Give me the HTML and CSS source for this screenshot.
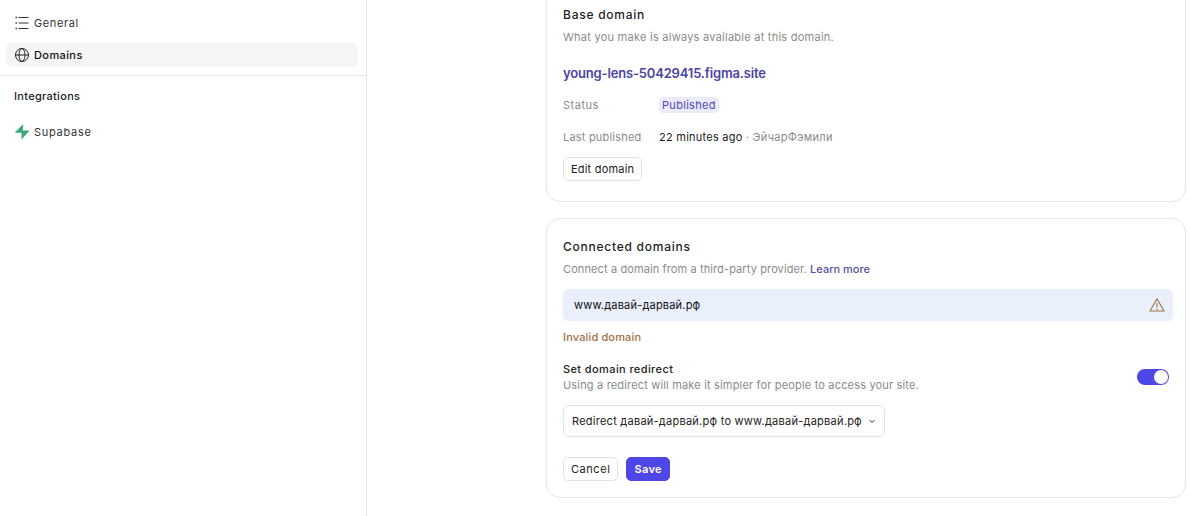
FILE: index.html
```html
<!DOCTYPE html>
<html lang="en">
<head>
<meta charset="utf-8">
<title>Domains</title>
<link rel="stylesheet" href="styles.css">
</head>
<body>
<div class="app">
  <aside class="sidebar">
    <nav class="nav-top">
      <a class="nav-item">
        <svg class="nav-icon" viewBox="0 0 16 16" fill="none" stroke="#333" stroke-width="1"><path d="M4.500 2.500h10M4.500 8h10M4.500 13.500h10"/><path d="M1.500 2.500h1.400M1.500 8h1.400M1.500 13.500h1.400" stroke-width="1.500"/></svg>
        <span>General</span>
      </a>
      <a class="nav-item active">
        <svg class="nav-icon" viewBox="0 0 16 16" fill="none" stroke="#222" stroke-width="1"><circle cx="8" cy="8" r="6.500"/><ellipse cx="8" cy="8" rx="3" ry="6.500"/><path d="M1.500 8h13"/></svg>
        <span>Domains</span>
      </a>
    </nav>
    <div class="nav-bottom">
      <div class="nav-title">Integrations</div>
      <a class="nav-item">
        <svg class="nav-icon" viewBox="0 0 16 16"><path fill="#45b98a" d="M9 .5 1 8.500h6.500L8 8z"/><path fill="#39a87b" d="M9 .5 8.800 6.500H15.500L7.500 15.500 7.500 8.500H1z"/></svg>
        <span class="supabase-label">Supabase</span>
      </a>
    </div>
  </aside>
  <main class="main">
    <section class="card card-base">
      <h2 class="card-title">Base domain</h2>
      <p class="muted desc desc-base">What you make is always available at this domain.</p>
      <a class="site-link">young-lens-50429415.figma.site</a>
      <div class="meta-row status-row">
        <span class="meta-label muted">Status</span>
        <span class="badge">Published</span>
      </div>
      <div class="meta-row published-row">
        <span class="meta-label muted">Last published</span>
        <span class="meta-value">22 minutes ago</span>
        <span class="muted meta-by">· ЭйчарФэмили</span>
      </div>
      <button class="btn edit-btn">Edit domain</button>
    </section>
    <section class="card card-connected">
      <h2 class="card-title">Connected domains</h2>
      <p class="muted desc desc-connected">Connect a domain from a third-party provider. <a class="learn">Learn more</a></p>
      <div class="domain-input">
        <span>www.давай-дарвай.рф</span>
        <svg class="warn" viewBox="0 0 16 16" fill="none" stroke="#a0703f" stroke-width="1.100" stroke-linejoin="round"><path d="M8 1.800 1 14h14z"/><path d="M8 6v4.300M8 11.500v1.200"/></svg>
      </div>
      <div class="invalid">Invalid domain</div>
      <div class="redirect-row">
        <div class="redirect-copy">
          <div class="redirect-title">Set domain redirect</div>
          <div class="muted redirect-desc">Using a redirect will make it simpler for people to access your site.</div>
        </div>
        <span class="toggle"><span class="knob"></span></span>
      </div>
      <div class="select">
        <span>Redirect давай-дарвай.рф to www.давай-дарвай.рф</span>
        <svg class="chev" viewBox="0 0 8 8" fill="none" stroke="#333" stroke-width="1"><path d="M1.500 3 4 5.500 6.500 3"/></svg>
      </div>
      <div class="actions">
        <button class="btn">Cancel</button>
        <button class="btn primary">Save</button>
      </div>
    </section>
  </main>
</div>
</body>
</html>
```

FILE: styles.css
```css
* { box-sizing: border-box; }
html, body { margin: 0; height: 100%; overflow: hidden; background: #fff; }
body { font-family: Inter, "Noto Sans", sans-serif; font-size: 11px; line-height: 16px; letter-spacing: .2px; color: #1e1e1e; }
.app { display: flex; height: 516px; }
.sidebar { width: 367px; flex: none; border-right: 1px solid #e6e6e6; }
.nav-top { padding: 11px 8px 8px 6px; border-bottom: 1px solid #e6e6e6; display: flex; flex-direction: column; gap: 8px; }
.nav-item { display: flex; align-items: center; gap: 4px; height: 24px; padding: 0 8px; border-radius: 6px; color: #333; letter-spacing: .6px; }
.nav-item.active { background: #f5f5f5; color: #111; font-weight: 500; letter-spacing: .4px; }
.supabase-label { letter-spacing: .72px; }
.nav-icon { width: 16px; height: 16px; flex: none; }
.nav-bottom { padding: 12px 8px 0 6px; }
.nav-title { padding-left: 8px; font-weight: 500; color: #222; margin-bottom: 16px; letter-spacing: .3px; }
.main { flex: 1; padding: 0 4px 0 179px; margin-top: -14px; display: flex; flex-direction: column; gap: 16px; }
.card { border: 1px solid #e6e6e6; border-radius: 14px; padding: 0 12px 0 16px; flex: none; }
.card-base { height: 216px; padding-top: 20px; }
.card-connected { height: 280px; padding-top: 20px; }
.card-title { margin: 0; font-size: 12px; line-height: 16px; font-weight: 500; letter-spacing: .75px; color: #1e1e1e; }
.muted { color: #8a8a8a; }
.desc { margin: 6px 0 0; }
.desc-base { letter-spacing: .25px; }
.desc-connected { letter-spacing: .11px; }
.redirect-desc { letter-spacing: .17px; }
.site-link { display: block; margin-top: 20px; font-size: 13px; line-height: 16px; font-weight: 600; letter-spacing: -.17px; color: #4a45a5; }
.meta-row { display: flex; align-items: center; height: 16px; }
.status-row { margin-top: 16px; }
.published-row { margin-top: 16px; }
.meta-label { width: 96px; flex: none; }
.status-row .meta-label { letter-spacing: .5px; }
.badge { background: #ebebfb; color: #4f4ab5; border-radius: 4px; padding: 0 3px; height: 16px; letter-spacing: .3px; }
.meta-value { color: #222; letter-spacing: .25px; }
.meta-by { margin-left: 3px; letter-spacing: .3px; }
.btn { font: inherit; letter-spacing: .2px; height: 24px; padding: 0 7px; background: #fff; color: #222; border: 1px solid #e3e3e3; border-radius: 5px; }
.edit-btn { display: block; margin-top: 12px; }
.learn { color: #5550a5; font-weight: 500; letter-spacing: 0; }
.domain-input { display: flex; align-items: center; justify-content: space-between; height: 32px; margin-top: 12px; padding: 0 8px 0 11px; background: #e9effb; border-radius: 5px; color: #111; }
.warn { width: 16px; height: 16px; }
.invalid { margin-top: 8px; color: #a0703f; font-weight: 500; letter-spacing: .15px; }
.redirect-row { display: flex; align-items: center; justify-content: space-between; margin-top: 16px; padding-right: 4px; }
.redirect-copy { line-height: 16px; }
.redirect-title { color: #222; font-weight: 500; letter-spacing: .4px; }
.toggle { width: 32px; height: 16px; display: flex; justify-content: flex-end; align-items: center; background: #4f46e8; border-radius: 8px; padding: 1px; }
.knob { width: 14px; height: 14px; background: #fff; border-radius: 50%; }
.select { display: inline-flex; align-items: center; gap: 6px; height: 32px; margin-top: 12px; padding: 0 8px; border: 1px solid #e3e3e3; border-radius: 5px; color: #222; letter-spacing: .25px; }
.chev { width: 8px; height: 8px; }
.actions { display: flex; gap: 8px; margin-top: 20px; }
.actions .btn { letter-spacing: .55px; }
.actions .primary { background: #4f46e8; border-color: #4f46e8; color: #fff; font-weight: 600; letter-spacing: .4px; }
```
